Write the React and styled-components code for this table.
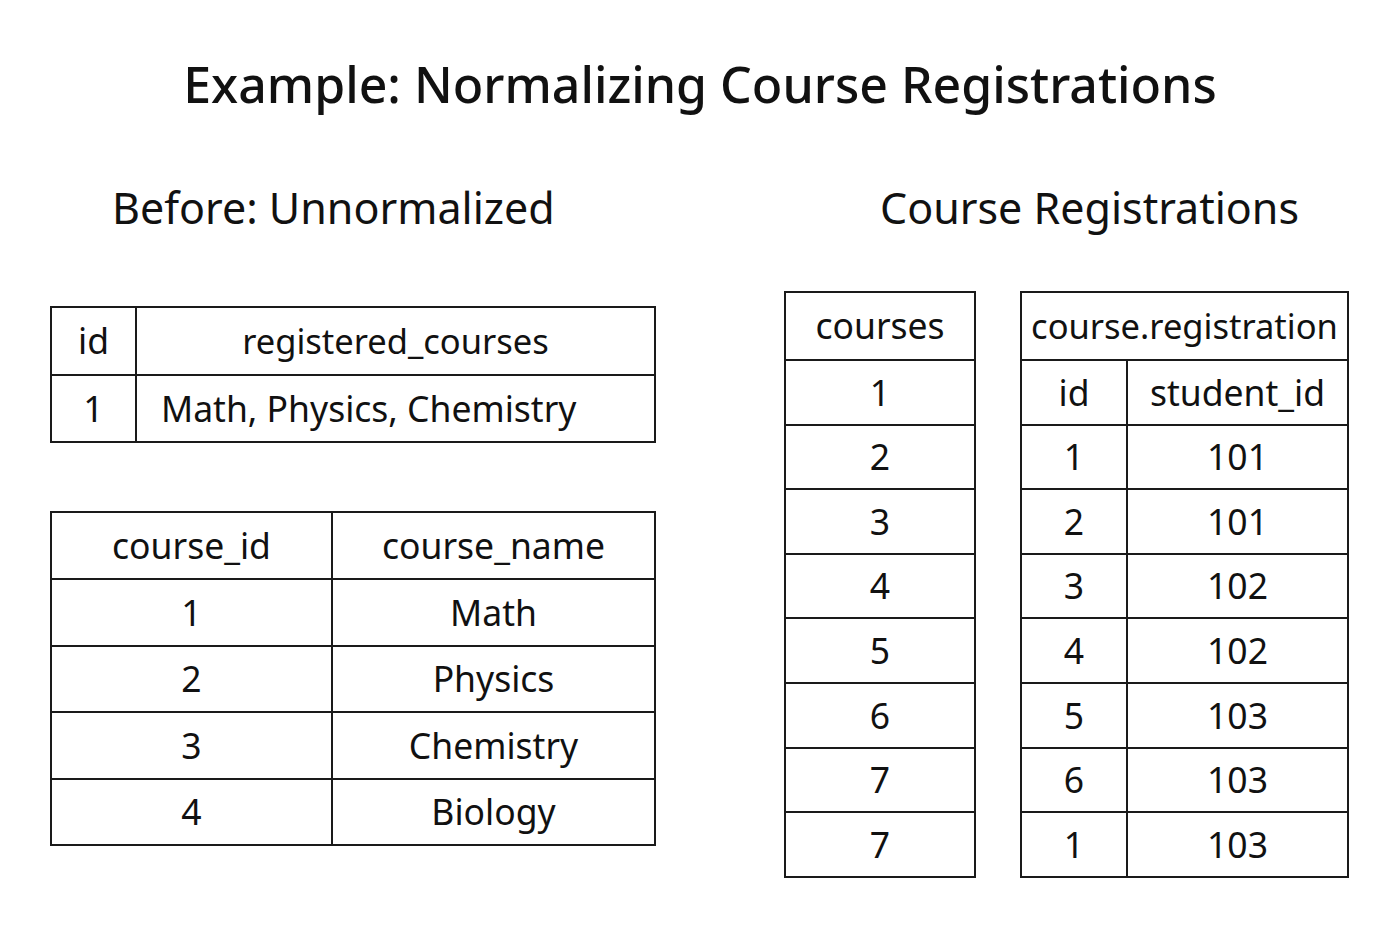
import React from 'react';
import styled, { createGlobalStyle } from 'styled-components';

const GlobalStyle = createGlobalStyle`
  html, body {
    margin: 0;
    padding: 0;
    background: #ffffff;
  }
  body {
    font-family: 'Noto Sans', 'Open Sans', sans-serif;
    color: #111;
  }
`;

const Page = styled.div`
  width: 1400px;
  height: 933px;
  box-sizing: border-box;
  padding: 52px 0 0 50px;
  background: #fff;
`;

const Title = styled.h1`
  margin: 0 50px 0 0;
  text-align: center;
  font-size: 50px;
  font-weight: 500;
  line-height: 64px;
`;

const Columns = styled.div`
  display: grid;
  grid-template-columns: 606px 565px;
  column-gap: 128px;
  margin-top: 62px;
`;

const Column = styled.div`
  display: flex;
  flex-direction: column;
`;

const SubTitle = styled.h2`
  margin: 0 0 0 ${(p) => p.$indent}px;
  font-size: 43px;
  font-weight: 400;
  line-height: 60px;
`;

const Stack = styled.div`
  display: flex;
  flex-direction: column;
  gap: 68px;
  margin-top: ${(p) => p.$top}px;
`;

const TablesRow = styled.div`
  display: flex;
  gap: 44px;
  margin-top: ${(p) => p.$top}px;
`;

const Table = styled.table`
  border-collapse: collapse;
  width: ${(p) => p.$width}px;
  table-layout: fixed;
  font-size: 35.5px;
`;

const Cell = styled.td`
  border: 2px solid #1a1a1a;
  height: ${(p) => p.$h}px;
  padding: 0 ${(p) => (p.$left ? 24 : 0)}px;
  text-align: ${(p) => (p.$left ? 'left' : 'center')};
  font-size: ${(p) => (p.$small ? '34.5px' : 'inherit')};
  vertical-align: middle;
  line-height: 1;
  box-sizing: border-box;
  white-space: nowrap;
`;

const courses = [
  [1, 'Math'],
  [2, 'Physics'],
  [3, 'Chemistry'],
  [4, 'Biology'],
];

const courseRows = [1, 2, 3, 4, 5, 6, 7, 7];

const registrations = [
  [1, 101],
  [2, 101],
  [3, 102],
  [4, 102],
  [5, 103],
  [6, 103],
  [1, 103],
];

export default function App() {
  return (
    <>
      <GlobalStyle />
      <Page>
        <Title>Example: Normalizing Course Registrations</Title>
        <Columns>
          <Column>
            <SubTitle $indent={62}>Before: Unnormalized</SubTitle>
            <Stack $top={68}>
              <Table $width={606}>
                <colgroup>
                  <col style={{ width: 85 }} />
                  <col />
                </colgroup>
                <tbody>
                  <tr>
                    <Cell $h={68}>id</Cell>
                    <Cell $h={68} $small>registered_courses</Cell>
                  </tr>
                  <tr>
                    <Cell $h={67}>1</Cell>
                    <Cell $h={67} $left>Math, Physics, Chemistry</Cell>
                  </tr>
                </tbody>
              </Table>
              <Table $width={606}>
                <colgroup>
                  <col style={{ width: 281 }} />
                  <col />
                </colgroup>
                <tbody>
                  <tr>
                    <Cell $h={67}>course_id</Cell>
                    <Cell $h={67}>course_name</Cell>
                  </tr>
                  {courses.map(([id, name]) => (
                    <tr key={id}>
                      <Cell $h={66.5}>{id}</Cell>
                      <Cell $h={66.5}>{name}</Cell>
                    </tr>
                  ))}
                </tbody>
              </Table>
            </Stack>
          </Column>
          <Column>
            <SubTitle $indent={96}>Course Registrations</SubTitle>
            <TablesRow $top={53}>
              <Table $width={192}>
                <tbody>
                  <tr>
                    <Cell $h={68}>courses</Cell>
                  </tr>
                  {courseRows.map((n, i) => (
                    <tr key={i}>
                      <Cell $h={64.6}>{n}</Cell>
                    </tr>
                  ))}
                </tbody>
              </Table>
              <Table $width={329}>
                <colgroup>
                  <col style={{ width: 106 }} />
                  <col />
                </colgroup>
                <tbody>
                  <tr>
                    <Cell $h={68} colSpan={2} $small>course.registration</Cell>
                  </tr>
                  <tr>
                    <Cell $h={64.6}>id</Cell>
                    <Cell $h={64.6}>student_id</Cell>
                  </tr>
                  {registrations.map(([id, sid], i) => (
                    <tr key={i}>
                      <Cell $h={64.6}>{id}</Cell>
                      <Cell $h={64.6}>{sid}</Cell>
                    </tr>
                  ))}
                </tbody>
              </Table>
            </TablesRow>
          </Column>
        </Columns>
      </Page>
    </>
  );
}
